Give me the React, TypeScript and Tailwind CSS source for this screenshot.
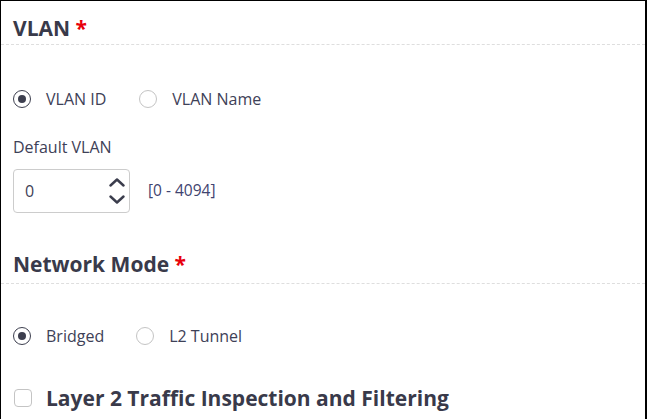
import React from 'react';

const Radio: React.FC<{ checked?: boolean; label: string }> = ({ checked, label }) => (
  <label className="flex items-center">
    <span
      className={`flex h-[18px] w-[18px] items-center justify-center rounded-full border-[1.5px] ${
        checked ? 'border-[#3d3f4f]' : 'border-[#c4c4c4]'
      }`}
    >
      {checked && <span className="h-[8px] w-[8px] rounded-full bg-[#3d3f4f]" />}
    </span>
    <span className="ml-[15px] text-[16px] leading-[20px] text-[#3e4157]">{label}</span>
  </label>
);

const SectionTitle: React.FC<{ title: string; className?: string }> = ({ title, className }) => (
  <div className={`border-b border-dashed border-[#dedede] pl-3 ${className ?? ''}`}>
    <h2 className="text-[21px] font-bold leading-[28px] text-[#393a4a]">
      {title} <span className="text-[#e8000b]">*</span>
    </h2>
  </div>
);

const Spinner = () => (
  <svg width="16" height="26" viewBox="0 0 16 26" fill="none" stroke="#3b3d4d" strokeWidth="2.4" strokeLinecap="round" strokeLinejoin="round">
    <path d="M1.5 7.5 L8 1.5 L14.5 7.5" />
    <path d="M1.5 18.5 L8 24.5 L14.5 18.5" />
  </svg>
);

export default function App() {
  return (
    <div className="h-[419px] w-[647px] overflow-hidden border-l border-r-2 border-t border-black bg-white font-['Open_Sans',sans-serif]">
      <SectionTitle title="VLAN" className="pt-[13px] pb-[2px]" />

      <div className="mt-[44px] flex items-center pl-3">
        <Radio checked label="VLAN ID" />
        <div className="ml-[33px]">
          <Radio label="VLAN Name" />
        </div>
      </div>

      <div className="mt-[28px] pl-3 text-[16px] leading-[20px] text-[#3e4157]">Default VLAN</div>

      <div className="mt-[12px] flex items-center pl-3">
        <div className="flex h-[44px] w-[117px] items-center justify-between rounded-[4px] border border-[#cccccc] pl-[11px] pr-[4px]">
          <span className="text-[16px] text-[#3e4157]">0</span>
          <Spinner />
        </div>
        <span className="ml-[18px] text-[15.5px] text-[#3f4470]">[0 - 4094]</span>
      </div>

      <SectionTitle title="Network Mode" className="mt-[37px] pb-[5px]" />

      <div className="mt-[42px] flex items-center pl-3">
        <Radio checked label="Bridged" />
        <div className="ml-[32px]">
          <Radio label="L2 Tunnel" />
        </div>
      </div>

      <div className="mt-[38px] border-b border-dashed border-[#dedede] pb-[7px] pl-3">
        <div className="flex h-[28px] items-center">
          <span className="ml-px h-[18px] w-[18px] rounded-[4px] border-[1.5px] border-[#c4c4c4]" />
          <span className="ml-[14px] text-[21px] font-bold leading-[28px] text-[#393a4a]">
            Layer 2 Traffic Inspection and Filtering
          </span>
        </div>
      </div>
    </div>
  );
}
